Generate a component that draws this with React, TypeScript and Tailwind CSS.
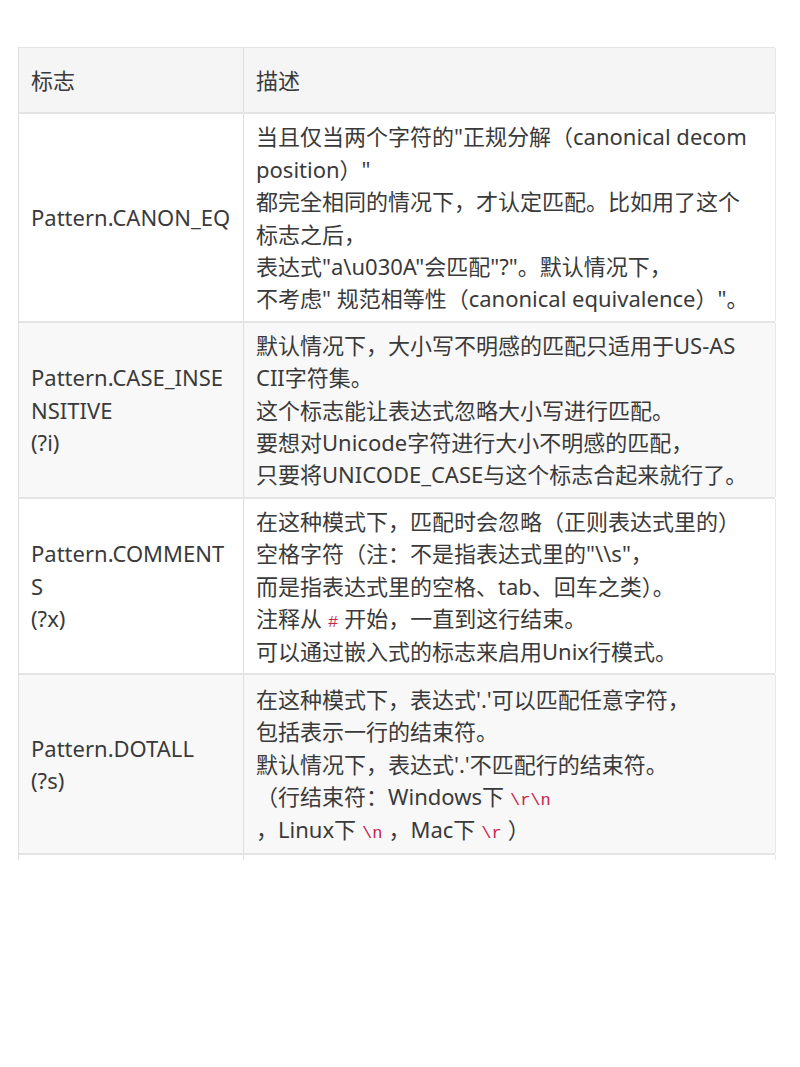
import type { ReactNode } from 'react';

type Row = {
  flag: ReactNode[];
  desc: ReactNode[];
  shaded?: boolean;
  tall?: boolean;
};

function Code({ children }: { children: ReactNode }) {
  return (
    <code className="font-['Liberation_Mono',monospace] text-[17px] leading-none text-[#c7254e] px-[6px]">
      {children}
    </code>
  );
}

const rows: Row[] = [
  {
    flag: ['Pattern.CANON_EQ'],
    desc: [
      '当且仅当两个字符的"正规分解（canonical decom',
      'position）"',
      '都完全相同的情况下，才认定匹配。比如用了这个',
      '标志之后，',
      '表达式"a\\u030A"会匹配"?"。默认情况下，',
      '不考虑" 规范相等性（canonical equivalence）"。',
    ],
  },
  {
    flag: ['Pattern.CASE_INSE', 'NSITIVE', '(?i)'],
    desc: [
      '默认情况下，大小写不明感的匹配只适用于US-AS',
      'CII字符集。',
      '这个标志能让表达式忽略大小写进行匹配。',
      '要想对Unicode字符进行大小不明感的匹配，',
      '只要将UNICODE_CASE与这个标志合起来就行了。',
    ],
    shaded: true,
  },
  {
    flag: ['Pattern.COMMENT', 'S', '(?x)'],
    desc: [
      '在这种模式下，匹配时会忽略（正则表达式里的）',
      '空格字符（注：不是指表达式里的"\\\\s"，',
      '而是指表达式里的空格、tab、回车之类）。',
      <>
        注释从<Code>#</Code>开始，一直到这行结束。
      </>,
      '可以通过嵌入式的标志来启用Unix行模式。',
    ],
  },
  {
    flag: ['Pattern.DOTALL', '(?s)'],
    desc: [
      '在这种模式下，表达式\'.\'可以匹配任意字符，',
      '包括表示一行的结束符。',
      '默认情况下，表达式\'.\'不匹配行的结束符。',
      <>
        （行结束符：Windows下<Code>\r\n</Code>
      </>,
      <>
        ，Linux下<Code>\n</Code>，Mac下<Code>\r</Code>）
      </>,
    ],
    shaded: true,
    tall: true,
  },
];

function Lines({ lines }: { lines: ReactNode[] }) {
  return (
    <div>
      {lines.map((line, i) => (
        <div key={i} className="whitespace-pre">
          {line}
        </div>
      ))}
    </div>
  );
}

export default function App() {
  return (
    <div className="min-h-[1067px] bg-white pt-[47px] pl-[18px] font-['Noto_Sans','Noto_Sans_CJK_SC',sans-serif] text-[22px] leading-[32.4px] text-[#3a3a3a]">
      <div className="w-[757px] border-l border-[#dedede]">
        {/* Header */}
        <div className="grid grid-cols-[225px_532px] bg-[#f5f5f5] border-t border-[#e6e6e6]">
          <div className="px-[12px] py-[16px] border-r border-[#dedede]">标志</div>
          <div className="px-[12px] py-[16px] border-r border-[#e8e8e8]">描述</div>
        </div>

        {rows.map((row, i) => (
          <div
            key={i}
            className={`grid grid-cols-[225px_532px] border-t-2 border-[#e4e4e4] ${row.shaded ? 'bg-[#f8f8f8]' : 'bg-white'}`}
          >
            <div className={`flex items-center px-[12px] border-r border-[#dedede] ${row.tall ? 'py-[8px]' : 'py-[6px]'}`}>
              <Lines lines={row.flag} />
            </div>
            <div className={`px-[12px] border-r border-[#e8e8e8] ${row.tall ? 'py-[8px]' : 'py-[6px]'}`}>
              <Lines lines={row.desc} />
            </div>
          </div>
        ))}

        {/* cut-off next row */}
        <div className="grid grid-cols-[225px_532px] h-[7px] border-t-2 border-[#e4e4e4]">
          <div className="border-r border-[#dedede]" />
          <div className="border-r border-[#e8e8e8]" />
        </div>
      </div>
    </div>
  );
}
